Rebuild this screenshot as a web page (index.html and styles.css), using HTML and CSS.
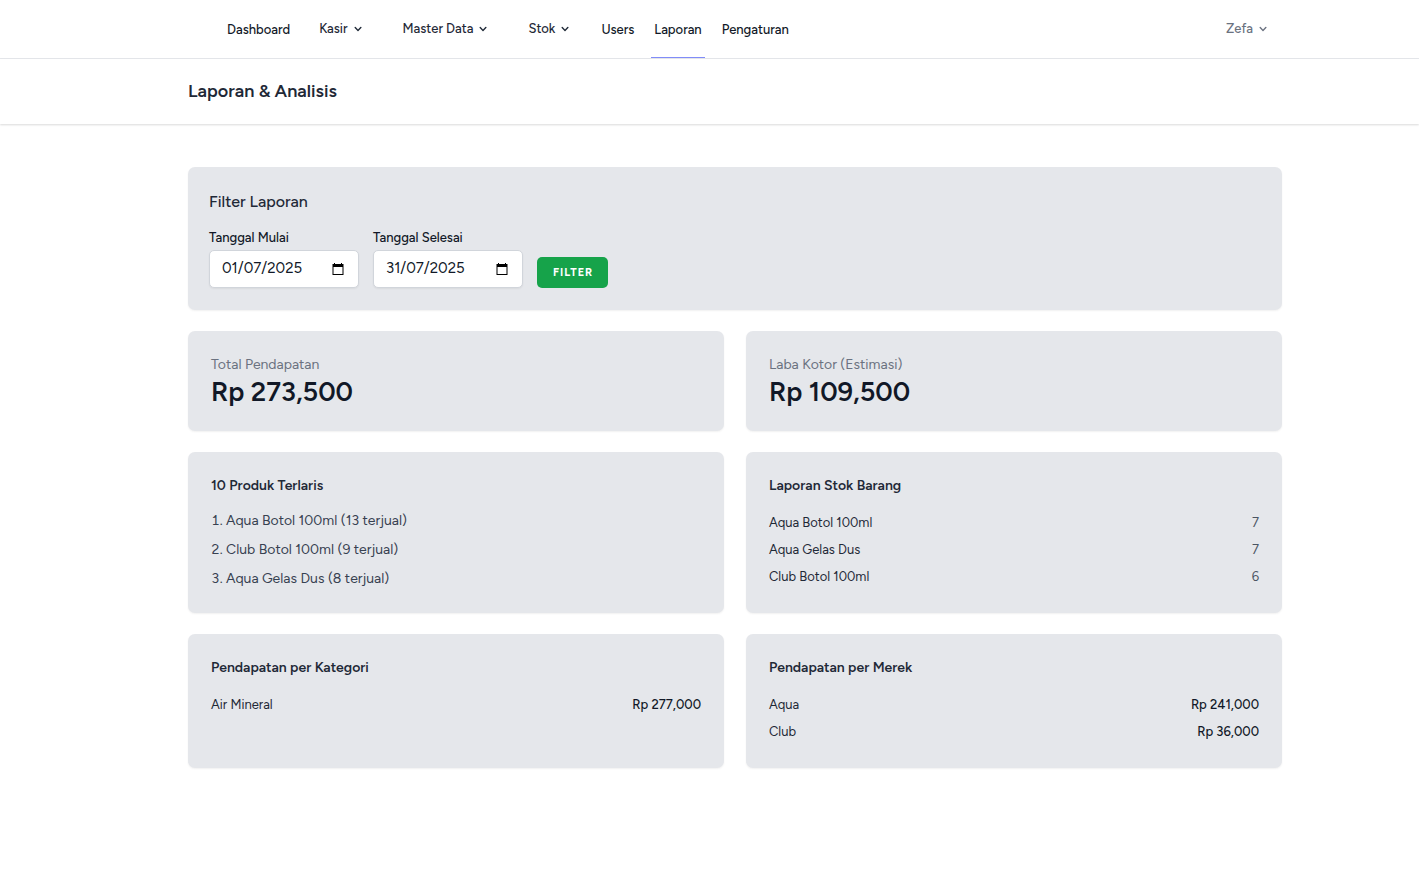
FILE: index.html
```html
<!DOCTYPE html>
<html lang="id">
<head>
<meta charset="utf-8">
<meta name="viewport" content="width=device-width, initial-scale=1">
<title>Laporan &amp; Analisis</title>
<link rel="stylesheet" href="styles.css">
</head>
<body>
<nav class="nav">
  <div class="container nav-inner">
    <div class="nav-links">
      <a class="nav-link" href="#">Dashboard</a>
      <button class="nav-drop" type="button">Kasir <svg class="chevron" viewBox="0 0 20 20"><path d="M5.3 7.3a1 1 0 0 1 1.4 0L10 10.6l3.3-3.3a1 1 0 1 1 1.4 1.4l-4 4a1 1 0 0 1-1.4 0l-4-4a1 1 0 0 1 0-1.4z"/></svg></button>
      <button class="nav-drop" type="button">Master Data <svg class="chevron" viewBox="0 0 20 20"><path d="M5.3 7.3a1 1 0 0 1 1.4 0L10 10.6l3.3-3.3a1 1 0 1 1 1.4 1.4l-4 4a1 1 0 0 1-1.4 0l-4-4a1 1 0 0 1 0-1.4z"/></svg></button>
      <button class="nav-drop" type="button">Stok <svg class="chevron" viewBox="0 0 20 20"><path d="M5.3 7.3a1 1 0 0 1 1.4 0L10 10.6l3.3-3.3a1 1 0 1 1 1.4 1.4l-4 4a1 1 0 0 1-1.4 0l-4-4a1 1 0 0 1 0-1.4z"/></svg></button>
      <a class="nav-link" href="#">Users</a>
      <a class="nav-link nav-link-active" href="#">Laporan</a>
      <a class="nav-link" href="#">Pengaturan</a>
    </div>
    <button class="nav-drop nav-user" type="button">Zefa <svg class="chevron" viewBox="0 0 20 20"><path d="M5.3 7.3a1 1 0 0 1 1.4 0L10 10.6l3.3-3.3a1 1 0 1 1 1.4 1.4l-4 4a1 1 0 0 1-1.4 0l-4-4a1 1 0 0 1 0-1.4z"/></svg></button>
  </div>
</nav>
<header class="page-header">
  <div class="container"><h1 class="page-title">Laporan &amp; Analisis</h1></div>
</header>
<main class="main">
  <div class="container cards">
    <section class="card card-filter">
      <h2 class="filter-title">Filter Laporan</h2>
      <form class="filter-form">
        <div class="field">
          <label class="label" for="mulai">Tanggal Mulai</label>
          <div class="date-box">
            <input class="date-input" id="mulai" type="text" value="01/07/2025">
            <svg class="calendar" viewBox="0 0 14 14"><path d="M3 1h1v1h6V1h1v1h1.500v11h-11V2H3zM2.500 5v7h9V5z" fill-rule="evenodd"/></svg>
          </div>
        </div>
        <div class="field">
          <label class="label" for="selesai">Tanggal Selesai</label>
          <div class="date-box">
            <input class="date-input" id="selesai" type="text" value="31/07/2025">
            <svg class="calendar" viewBox="0 0 14 14"><path d="M3 1h1v1h6V1h1v1h1.500v11h-11V2H3zM2.500 5v7h9V5z" fill-rule="evenodd"/></svg>
          </div>
        </div>
        <button class="btn" type="button">FILTER</button>
      </form>
    </section>
    <section class="card">
      <p class="stat-label">Total Pendapatan</p>
      <p class="stat-value">Rp 273,500</p>
    </section>
    <section class="card">
      <p class="stat-label">Laba Kotor (Estimasi)</p>
      <p class="stat-value">Rp 109,500</p>
    </section>
    <section class="card">
      <h2 class="card-title">10 Produk Terlaris</h2>
      <ol class="ranking">
        <li>Aqua Botol 100ml (13 terjual)</li>
        <li>Club Botol 100ml (9 terjual)</li>
        <li>Aqua Gelas Dus (8 terjual)</li>
      </ol>
    </section>
    <section class="card">
      <h2 class="card-title">Laporan Stok Barang</h2>
      <table class="table">
        <tr><td class="name">Aqua Botol 100ml</td><td class="count">7</td></tr>
        <tr><td class="name">Aqua Gelas Dus</td><td class="count">7</td></tr>
        <tr><td class="name">Club Botol 100ml</td><td class="count">6</td></tr>
      </table>
    </section>
    <section class="card">
      <h2 class="card-title">Pendapatan per Kategori</h2>
      <table class="table">
        <tr><td class="name">Air Mineral</td><td class="amount">Rp 277,000</td></tr>
      </table>
    </section>
    <section class="card">
      <h2 class="card-title">Pendapatan per Merek</h2>
      <table class="table">
        <tr><td class="name">Aqua</td><td class="amount">Rp 241,000</td></tr>
        <tr><td class="name">Club</td><td class="amount">Rp 36,000</td></tr>
      </table>
    </section>
  </div>
</main>
</body>
</html>
```
FILE: styles.css
```css
* { box-sizing: border-box; }
body {
  margin: 0;
  background: #fff;
  color: #111827;
  font-family: Figtree, Inter, sans-serif;
  font-size: 14px;
}
h1, h2, p, ol { margin: 0; padding: 0; }
button, input { font: inherit; color: inherit; }
.container { max-width: 1094px; margin: 0 auto; }
.nav, .page-header, .main { padding-left: 51px; }
.nav { border-bottom: 1px solid #e5e7eb; }
.nav-inner { display: flex; justify-content: space-between; height: 58px; padding-left: 36px; }
.nav-links { display: flex; gap: 14px; }
.nav-link {
  display: flex;
  align-items: center;
  padding: 2px 3px 0;
  border-bottom: 1px solid transparent;
  color: #111827;
  font-size: 13px;
  font-weight: 500;
  text-decoration: none;
}
.nav-link-active { border-color: #818cf8; }
.nav-drop {
  display: flex;
  align-items: center;
  gap: 3px;
  padding: 0 12px 1px;
  border: 0;
  background: none;
  color: #1f2937;
  font-size: 13px;
  font-weight: 500;
}
.nav-user { color: #6b7280; }
.chevron { width: 14px; height: 14px; fill: currentColor; }
.page-header { padding-top: 20px; padding-bottom: 21px; box-shadow: 0 1px 2px rgba(0, 0, 0, 0.15); }
.page-title { color: #1f2937; font-size: 18px; font-weight: 600; line-height: 24px; }
.main { padding-top: 43px; padding-bottom: 42px; }
.cards { display: grid; grid-template-columns: 1fr 1fr; gap: 21px 22px; }
.card { padding: 22px 23px; border-radius: 7px; background: #e5e7eb; box-shadow: 0 1px 2px rgba(0, 0, 0, 0.06); }
.card-filter { grid-column: 1 / -1; padding: 22px 21px; }
.filter-title { color: #1f2937; font-size: 16px; font-weight: 500; line-height: 26px; }
.filter-form { display: flex; align-items: flex-end; gap: 14px; margin-top: 14px; }
.label { display: block; margin-bottom: 3px; font-size: 13px; font-weight: 500; line-height: 18px; }
.date-box {
  display: flex;
  align-items: center;
  width: 150px;
  height: 38px;
  padding: 0 13px 0 12px;
  border: 1px solid #d1d5db;
  border-radius: 5px;
  background: #fff;
  box-shadow: 0 1px 2px rgba(0, 0, 0, 0.06);
}
.date-input { flex: 1; min-width: 0; padding: 0 0 2px; border: 0; outline: 0; background: none; font-size: 15px; }
.calendar { flex: none; width: 14px; height: 14px; }
.btn {
  height: 31px;
  padding: 0 15px 0 16px;
  border: 0;
  border-radius: 5px;
  background: #16a34a;
  color: #fff;
  font-size: 11px;
  font-weight: 700;
  letter-spacing: 1px;
}
.stat-label { color: #6b7280; line-height: 23px; }
.stat-value { margin-bottom: 2px; font-size: 27px; font-weight: 600; line-height: 31px; }
.card-title { color: #1f2937; font-size: 14px; font-weight: 600; line-height: 23px; }
.ranking { display: grid; gap: 7px; margin-top: 13px; list-style-position: inside; color: #374151; line-height: 22px; }
.table { width: 100%; margin: 12px 0 1px; border-collapse: collapse; color: #374151; font-size: 13px; line-height: 19px; }
.table td { padding: 4px 0; }
.table .name { color: #1f2937; }
.table .count { color: #4b5563; text-align: right; }
.table .amount { color: #111827; font-weight: 500; text-align: right; }
```
